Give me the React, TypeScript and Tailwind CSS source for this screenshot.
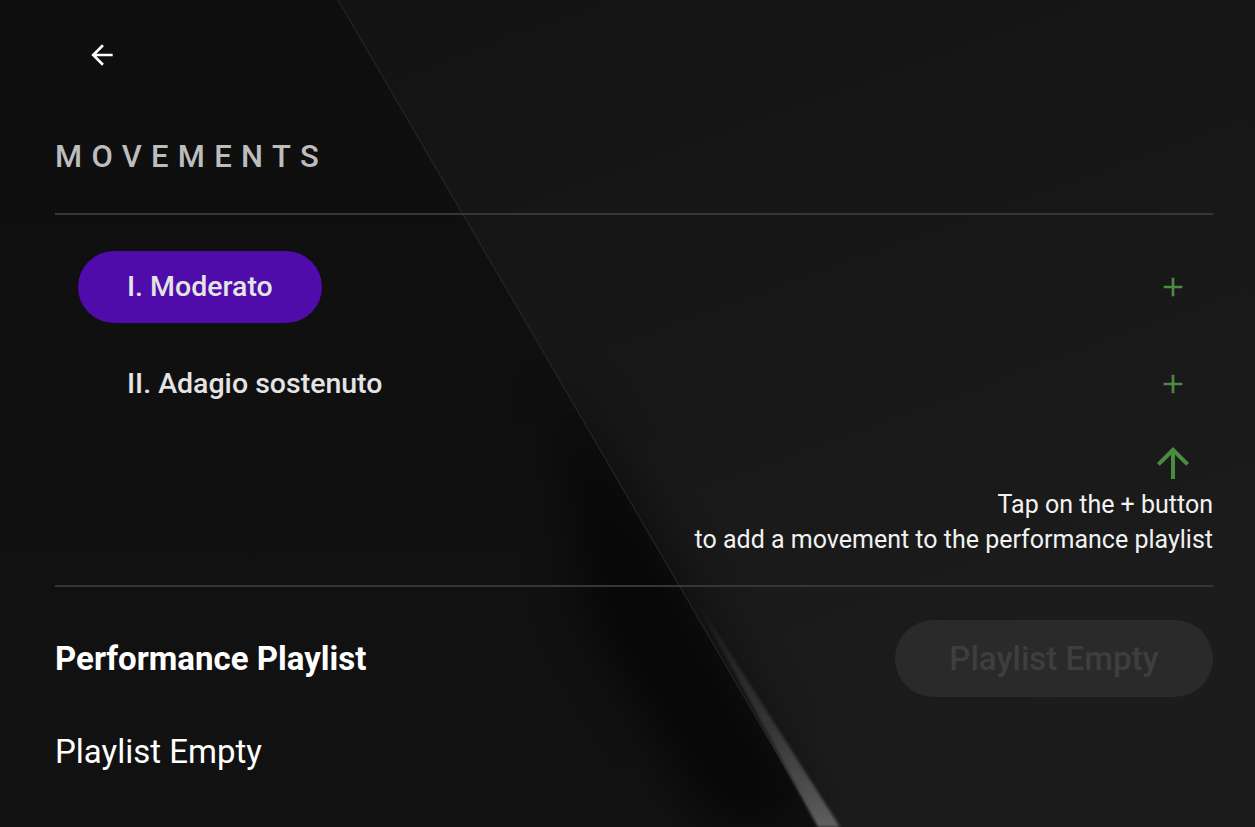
const movements = [
  { title: "I. Moderato", active: true },
  { title: "II. Adagio sostenuto", active: false },
];

function PlusIcon() {
  return (
    <svg viewBox="0 0 24 24" className="h-8 w-8 fill-[#4a8c3f]">
      <path d="M19 13h-6v6h-2v-6H5v-2h6V5h2v6h6v2z" />
    </svg>
  );
}

function Backdrop() {
  return (
    <svg
      className="pointer-events-none absolute inset-0 h-full w-full"
      viewBox="0 0 1255 827"
      preserveAspectRatio="none"
    >
      <defs>
        <linearGradient id="right" x1="0" y1="0" x2="0.4" y2="1">
          <stop offset="0" stopColor="#131313" />
          <stop offset="1" stopColor="#1c1c1c" />
        </linearGradient>
        <linearGradient id="left" x1="0" y1="0" x2="0" y2="1">
          <stop offset="0" stopColor="#0e0e0f" />
          <stop offset="1" stopColor="#121212" />
        </linearGradient>
        <linearGradient id="glow" x1="0" y1="0" x2="0" y2="1">
          <stop offset="0" stopColor="#6a6a6a" stopOpacity="0" />
          <stop offset="0.55" stopColor="#5a5a5a" stopOpacity="0.45" />
          <stop offset="1" stopColor="#707070" stopOpacity="0.8" />
        </linearGradient>
        <filter id="soft" x="-50%" y="-50%" width="200%" height="200%">
          <feGaussianBlur stdDeviation="26" />
        </filter>
        <filter id="thin" x="-50%" y="-50%" width="200%" height="200%">
          <feGaussianBlur stdDeviation="1.5" />
        </filter>
      </defs>
      <rect width="1255" height="827" fill="url(#left)" />
      <polygon points="338,0 1255,0 1255,827 820,827" fill="url(#right)" />
      <polygon
        points="560,380 680,585 820,827 710,827 590,620"
        fill="#000000"
        opacity="0.6"
        filter="url(#soft)"
      />
      <line x1="338" y1="0" x2="820" y2="827" stroke="#2a2420" strokeWidth="1.2" />
      <polygon points="690,590 840,827 818,827" fill="url(#glow)" filter="url(#thin)" />
    </svg>
  );
}

export default function App() {
  return (
    <div className="relative h-[827px] w-full overflow-hidden bg-[#101010] font-['Roboto',sans-serif]">
      <Backdrop />

      <div className="relative flex flex-col pl-[55px] pr-[42px]">
        {/* Header */}
        <div className="h-[71px] pt-[39px]">
          <button className="ml-[31px] flex h-8 w-8 items-center justify-center">
            <svg viewBox="0 0 24 24" className="h-8 w-8 fill-white">
              <path d="M20 11H7.83l5.59-5.59L12 4l-8 8 8 8 1.41-1.41L7.83 13H20v-2z" />
            </svg>
          </button>
        </div>

        <h1 className="mt-[70px] text-[31px] font-medium leading-[32px] tracking-[0.3em] text-[#bdbdbd]">
          MOVEMENTS
        </h1>
        <div className="mt-[40px] h-[2px] bg-[#363636]" />

        {/* Movement list */}
        <div className="mt-[36px] flex flex-col gap-[25px]">
          {movements.map((m) => (
            <div key={m.title} className="flex h-[72px] items-center justify-between">
              <div
                className={`ml-[23px] flex h-[72px] items-center rounded-full px-[49px] text-[28.5px] font-medium text-[#e4e4e4] ${
                  m.active ? "bg-[#500caa]" : ""
                }`}
              >
                {m.title}
              </div>
              <button className="mr-[24px]">
                <PlusIcon />
              </button>
            </div>
          ))}
        </div>

        {/* Hint */}
        <div className="mt-[19px] flex flex-col items-end">
          <svg viewBox="0 0 24 24" className="mr-[16px] h-12 w-12 fill-[#4a8c3f]">
            <path d="M4 12l1.41 1.41L11 7.83V20h2V7.83l5.58 5.59L20 12l-8-8-8 8z" />
          </svg>
          <p className="text-right text-[25px] leading-[35px] text-[#f2f2f2]">
            Tap on the + button
            <br />
            to add a movement to the performance playlist
          </p>
        </div>
        <div className="mt-[28px] h-[2px] bg-[#363636]" />

        {/* Playlist */}
        <div className="mt-[33px] flex items-center justify-between">
          <h2 className="text-[33px] font-bold text-white">Performance Playlist</h2>
          <button className="flex h-[77px] w-[318px] items-center justify-center rounded-full bg-[#2a2a2a] text-[33px] font-medium text-[#3e3e3e]">
            Playlist Empty
          </button>
        </div>
        <p className="mt-[35px] text-[33px] leading-[40px] text-white">Playlist Empty</p>
      </div>
    </div>
  );
}
